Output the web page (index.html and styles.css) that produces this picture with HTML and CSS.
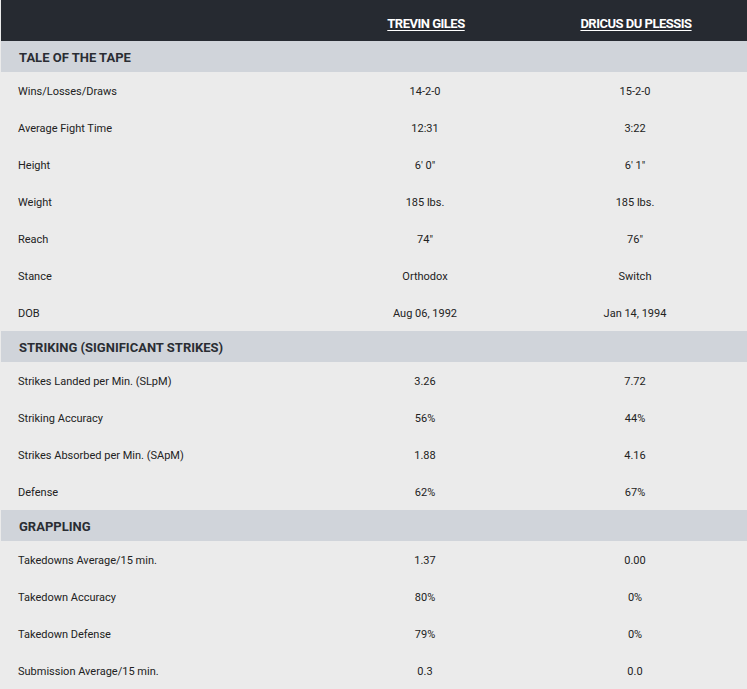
FILE: index.html
```html
<!DOCTYPE html>
<html>
<head>
<meta charset="utf-8">
<link rel="stylesheet" href="styles.css">
</head>
<body>
<div class="tape">
  <div class="row head">
    <div></div>
    <div class="c"><a class="name">TREVIN GILES</a></div>
    <div class="c"><a class="name">DRICUS DU PLESSIS</a></div>
  </div>

  <div class="section">TALE OF THE TAPE</div>
  <div class="row"><div>Wins/Losses/Draws</div><div class="c">14-2-0</div><div class="c">15-2-0</div></div>
  <div class="row"><div>Average Fight Time</div><div class="c">12:31</div><div class="c">3:22</div></div>
  <div class="row"><div>Height</div><div class="c">6' 0"</div><div class="c">6' 1"</div></div>
  <div class="row"><div>Weight</div><div class="c">185 lbs.</div><div class="c">185 lbs.</div></div>
  <div class="row"><div>Reach</div><div class="c">74"</div><div class="c">76"</div></div>
  <div class="row"><div>Stance</div><div class="c">Orthodox</div><div class="c">Switch</div></div>
  <div class="row"><div>DOB</div><div class="c">Aug 06, 1992</div><div class="c">Jan 14, 1994</div></div>

  <div class="section">STRIKING (SIGNIFICANT STRIKES)</div>
  <div class="row"><div>Strikes Landed per Min. (SLpM)</div><div class="c">3.26</div><div class="c">7.72</div></div>
  <div class="row"><div>Striking Accuracy</div><div class="c">56%</div><div class="c">44%</div></div>
  <div class="row"><div>Strikes Absorbed per Min. (SApM)</div><div class="c">1.88</div><div class="c">4.16</div></div>
  <div class="row"><div>Defense</div><div class="c">62%</div><div class="c">67%</div></div>

  <div class="section">GRAPPLING</div>
  <div class="row"><div>Takedowns Average/15 min.</div><div class="c">1.37</div><div class="c">0.00</div></div>
  <div class="row"><div>Takedown Accuracy</div><div class="c">80%</div><div class="c">0%</div></div>
  <div class="row"><div>Takedown Defense</div><div class="c">79%</div><div class="c">0%</div></div>
  <div class="row"><div>Submission Average/15 min.</div><div class="c">0.3</div><div class="c">0.0</div></div>
</div>
</body>
</html>
```

FILE: styles.css
```css
html, body {
  margin: 0;
  padding: 0;
  background: #ebebeb;
}
body {
  font-family: Roboto, "Noto Sans", sans-serif;
  color: #222;
  font-size: 11px;
}
.tape {
  width: 747px;
}
.row {
  display: grid;
  grid-template-columns: 302px 210px 210px 1fr;
  align-items: center;
  height: 37px;
  padding-left: 18px;
  padding-top: 2px;
  box-sizing: border-box;
}
.c {
  text-align: center;
}
.head {
  background: #262a31;
  height: 41px;
  padding-top: 6px;
  margin-left: 1px;
}
.name {
  color: #fff;
  font-family: Roboto, sans-serif;
  font-weight: 700;
  font-size: 13px;
  letter-spacing: -0.5px;
  text-decoration: underline;
  text-underline-offset: 2px;
}
.section {
  background: #d0d4da;
  height: 31px;
  line-height: 33px;
  padding-left: 18px;
  font-weight: 700;
  font-size: 13px;
  color: #2a2d33;
  margin-left: 1px;
}
```
